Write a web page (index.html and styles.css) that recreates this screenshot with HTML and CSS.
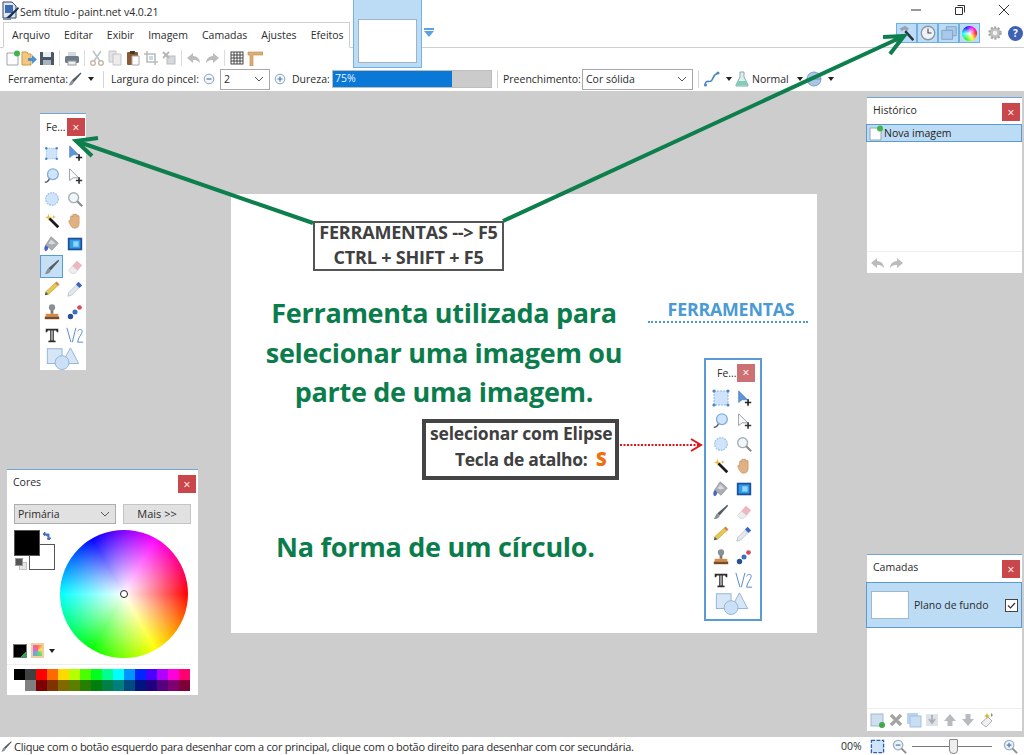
FILE: index.html
```html
<!DOCTYPE html>
<html lang="pt">
<head>
<meta charset="utf-8">
<title>Sem título - paint.net v4.0.21</title>
<link rel="stylesheet" href="styles.css">
</head>
<body>
<svg class="sprite" width="0" height="0" aria-hidden="true">
  <symbol id="i-app" viewBox="0 0 18 20"><path d="M1 1h9l4 4v12H1z" fill="#dfe8f4" stroke="#33475f"/><rect x="3" y="4" width="8" height="8" fill="#3d6cb5"/><path d="M4 17 16 6l1 1.500L7 18z" fill="#20304a"/><path d="M1 17h8v2H1z" fill="#7f93ad"/></symbol>
  <symbol id="i-new" viewBox="0 0 16 16"><path d="M2 3h8l3 3v9H2z" fill="#fff" stroke="#9aa5b1"/><circle cx="12" cy="3.500" r="3" fill="#3fb54a"/></symbol>
  <symbol id="i-open" viewBox="0 0 16 16"><path d="M1 2h5l1 2h3v11H1z" fill="#f4c87c" stroke="#c99a4a"/><path d="M7 8h4V5l5 4.500L11 14v-3H7z" fill="#4d92d6"/></symbol>
  <symbol id="i-save" viewBox="0 0 16 16"><path d="M1 2h13l1 1v12H1z" fill="#4a5866"/><rect x="4" y="2" width="8" height="5" fill="#e8edf2"/><rect x="4" y="10" width="8" height="5" fill="#a6b4c2"/></symbol>
  <symbol id="i-print" viewBox="0 0 16 16"><rect x="4" y="2" width="8" height="5" fill="#d5d9de"/><rect x="1" y="6" width="14" height="7" rx="1.500" fill="#6d7a88"/><rect x="4" y="11" width="8" height="4" fill="#eee" stroke="#999"/></symbol>
  <symbol id="i-cut" viewBox="0 0 16 16"><path d="M4 1l7 10M12 1 5 11" stroke="#c0c4c8" stroke-width="1.600" fill="none"/><circle cx="4" cy="13" r="2.300" fill="none" stroke="#c4b8a8" stroke-width="1.400"/><circle cx="12" cy="13" r="2.300" fill="none" stroke="#c4b8a8" stroke-width="1.400"/></symbol>
  <symbol id="i-copy" viewBox="0 0 16 16"><path d="M2 1h7v11H2z" fill="#e4e4e4" stroke="#c4c4c4"/><path d="M6 4h8v11H6z" fill="#ececec" stroke="#c4c4c4"/></symbol>
  <symbol id="i-paste" viewBox="0 0 16 16"><rect x="2" y="2" width="11" height="13" rx="1" fill="#8a5a34"/><rect x="5" y="1" width="5" height="3" fill="#4a3a2c"/><path d="M7 6h7v9H7z" fill="#fff" stroke="#aaa"/></symbol>
  <symbol id="i-crop" viewBox="0 0 16 16"><path d="M4 1v11h11M1 4h11v11" fill="none" stroke="#bbb" stroke-width="1.600"/><rect x="6" y="6" width="4" height="4" fill="#c9d8e6"/></symbol>
  <symbol id="i-desel" viewBox="0 0 16 16"><rect x="6" y="6" width="8" height="8" fill="#d3d9df" stroke="#bbb"/><path d="M2 2l6 6M8 2 2 8" stroke="#b5b5b5" stroke-width="1.800"/></symbol>
  <symbol id="i-undo" viewBox="0 0 16 16"><path d="M7 3 1 8l6 5v-3c3 0 5 .5 7 3 0-4-3-7-7-7z" fill="#bcbcbc"/></symbol>
  <symbol id="i-redo" viewBox="0 0 16 16"><path d="M9 3l6 5-6 5v-3c-3 0-5 .5-7 3 0-4 3-7 7-7z" fill="#bcbcbc"/></symbol>
  <symbol id="i-grid" viewBox="0 0 16 16"><rect x="2" y="2" width="12" height="12" fill="#fff" stroke="#444"/><path d="M5 2v12M8 2v12M11 2v12M2 5h12M2 8h12M2 11h12" stroke="#444"/></symbol>
  <symbol id="i-ruler" viewBox="0 0 16 16"><path d="M1 2h15v3H6v11H3V5H1z" fill="#dfae74" stroke="#b88748" stroke-width=".6"/></symbol>
  <symbol id="i-curve" viewBox="0 0 18 18"><path d="M2 15c1-7 5-1 7-5s2-6 6-7" fill="none" stroke="#4d84c4" stroke-width="1.600"/><circle cx="2.500" cy="15" r="1.500" fill="#4d84c4"/><circle cx="15" cy="3" r="1.500" fill="#4d84c4"/></symbol>
  <symbol id="i-flask" viewBox="0 0 14 16"><path d="M5 1h4v5l4 8v1H1v-1l4-8z" fill="#dff0ec" stroke="#87a9b4"/><path d="M3 10h8l1.500 4.500h-11z" fill="#7fcfb4"/></symbol>
  <symbol id="i-sphere" viewBox="0 0 16 16"><circle cx="8" cy="8" r="7" fill="#a9c6e4" stroke="#7c9cc0"/><path d="M1 8h14" stroke="#6f93bb"/></symbol>
  <symbol id="i-hammer" viewBox="0 0 20 20"><path d="M2 5 8 2l4 3-2 3-3-2-3 2z" fill="#9aa3ad"/><path d="M9 7l9 10-2 2L7 9z" fill="#27313f"/></symbol>
  <symbol id="i-clock" viewBox="0 0 20 20"><circle cx="10" cy="10" r="7.500" fill="#eef3f8" stroke="#8b97a5" stroke-width="1.500"/><path d="M10 5v5h4" fill="none" stroke="#444" stroke-width="1.200"/></symbol>
  <symbol id="i-layers" viewBox="0 0 20 20"><path d="M7 3h11v10H7z" fill="#a9c9ea" stroke="#7f9fc2"/><path d="M2 7h12v10H2z" fill="#a9c9ea" stroke="#7f9fc2"/></symbol>
  <symbol id="i-gear" viewBox="0 0 16 16"><circle cx="8" cy="8" r="5.500" fill="#c3c3c3" stroke="#a8a8a8" stroke-width="2.500" stroke-dasharray="2 1.500"/><circle cx="8" cy="8" r="2.200" fill="#f3f3f3"/></symbol>
  <symbol id="i-rect" viewBox="0 0 20 20"><rect x="3" y="3" width="14" height="14" fill="#cfe4fa" stroke="#8bb7e4" stroke-dasharray="2 1"/><g fill="#4c86c8"><circle cx="3" cy="3" r="1.600"/><circle cx="17" cy="3" r="1.600"/><circle cx="3" cy="17" r="1.600"/><circle cx="17" cy="17" r="1.600"/></g></symbol>
  <symbol id="i-movesel" viewBox="0 0 20 20"><path d="M4 2v13l4-3 6 0z" fill="#5c95d8" stroke="#3a6fb0" stroke-width=".6"/><path d="M11 15h7M14.500 11.500v7" stroke="#222" stroke-width="1.800"/></symbol>
  <symbol id="i-lasso" viewBox="0 0 20 20"><circle cx="11" cy="8" r="6" fill="#cfe4fa" stroke="#82aede" stroke-width="1.500"/><path d="M7 13c-1 3-3 4-5 4" stroke="#56606c" fill="none" stroke-width="1.600"/></symbol>
  <symbol id="i-movepx" viewBox="0 0 20 20"><path d="M4 2v13l4-3 6 0z" fill="#fff" stroke="#8c96a2"/><path d="M11 15h7M14.500 11.500v7" stroke="#333" stroke-width="1.800"/></symbol>
  <symbol id="i-ellipse" viewBox="0 0 20 20"><circle cx="10" cy="10" r="7" fill="#cfe4fa" stroke="#9fc4ea" stroke-width="1.400" stroke-dasharray="2 1"/></symbol>
  <symbol id="i-zoom" viewBox="0 0 20 20"><circle cx="8.500" cy="8.500" r="5.500" fill="#f3f6f9" stroke="#a7b0ba" stroke-width="1.600"/><path d="M12.500 12.500 18 18" stroke="#8c8c8c" stroke-width="2.400"/></symbol>
  <symbol id="i-wand" viewBox="0 0 20 20"><path d="M7 7l10 10" stroke="#1c1c1c" stroke-width="3"/><path d="M6 2l1 3 3 1-3 1-1 3-1-3-3-1 3-1z" fill="#e6c23a"/><path d="M12 3l.5 2 2 .5-2 .5-.5 2-.5-2-2-.5 2-.5z" fill="#c8b36a"/></symbol>
  <symbol id="i-hand" viewBox="0 0 20 20"><path d="M5 9V5.500a1.200 1.200 0 0 1 2.400 0V3.500a1.200 1.200 0 0 1 2.400 0a1.200 1.200 0 0 1 2.400 0V5a1.200 1.200 0 0 1 2.400 0v8c0 3-2 5-5 5-2.500 0-3.500-1-5-4L3 10.500C3 9 4.500 9 5 9z" fill="#dfb183" stroke="#b98a5c" stroke-width=".6"/></symbol>
  <symbol id="i-bucket" viewBox="0 0 20 20"><path d="M9 2l8 7-7 8-7-6z" fill="#a9aeb3" stroke="#777c82" stroke-width=".6"/><path d="M9 5l5 4.500-4 1-4-1z" fill="#d6d9dc"/><path d="M3 11c-2 2-2 6 0 7 1.500 0 2.500-2 3-4z" fill="#4a63c2"/></symbol>
  <symbol id="i-grad" viewBox="0 0 20 20"><rect x="2" y="3" width="16" height="14" fill="#1d4f9a"/><rect x="4" y="5" width="12" height="10" fill="#2f9ce8"/><rect x="8" y="7" width="6" height="6" fill="#8ed6fa"/></symbol>
  <symbol id="i-brush" viewBox="0 0 20 20"><path d="M17 2 6 11.500 8.500 14 18 3z" fill="#555c64"/><path d="M6 11.500C4 13 4 15 2 18c3 0 6-1 6.500-4z" fill="#8b9097"/></symbol>
  <symbol id="i-eraser" viewBox="0 0 20 20"><path d="M12 3l6 5-5 6-6-5z" fill="#eeb7c0"/><path d="M7 9l6 5-3 3H6l-3-3z" fill="#eee" stroke="#c8c8c8" stroke-width=".7"/></symbol>
  <symbol id="i-pencil" viewBox="0 0 20 20"><path d="M15 2l3 3L6 16l-3-3z" fill="#e6c850" stroke="#a89030" stroke-width=".5"/><path d="M3 13l3 3-4 1z" fill="#55504a"/><path d="M15 2l3 3-1.500 1.500-3-3z" fill="#d9795f"/></symbol>
  <symbol id="i-drop" viewBox="0 0 20 20"><path d="M14 2l4 4-3 3-4-4z" fill="#3868bd"/><path d="M11 6l3 3-8 8-4 1 1-4z" fill="#e4e9ef" stroke="#a7b0ba" stroke-width=".7"/></symbol>
  <symbol id="i-stamp" viewBox="0 0 20 20"><circle cx="10" cy="5" r="3.500" fill="#8b8f94"/><rect x="8.500" y="8" width="3" height="4" fill="#777"/><path d="M3 12h14v3H3z" fill="#d98a3e"/><path d="M2 15h16v3H2z" fill="#7c4a22"/></symbol>
  <symbol id="i-recolor" viewBox="0 0 20 20"><circle cx="15" cy="5" r="2.600" fill="#d64a5a"/><circle cx="10" cy="10" r="2.800" fill="#3b6fc0"/><circle cx="5" cy="15" r="3" fill="#274f9b"/></symbol>
  <symbol id="i-text" viewBox="0 0 20 20"><path d="M3 3h14v4h-1.500l-1-2H12v11l2 .5V18H6v-1.500l2-.5V5H5.500l-1 2H3z" fill="#2e2e2e"/><rect x="9" y="5" width="2" height="11" fill="#a8a8a8"/></symbol>
  <symbol id="i-line" viewBox="0 0 20 20"><path d="M1 2l4.500 16M7 18l4-16M13 6c1-3 5-3 5 0s-5 7-5 12h6" fill="none" stroke="#5a8cc8" stroke-width="1.100"/></symbol>
  <symbol id="i-shapes" viewBox="0 0 36 26"><rect x="1" y="3" width="16" height="16" fill="#d6e6f6" stroke="#8fb2d6"/><path d="M26 2l9 17H17z" fill="#d6e6f6" stroke="#8fb2d6"/><circle cx="17" cy="18" r="7.500" fill="#c9e0f6" stroke="#8fb2d6"/></symbol>
  <symbol id="i-laynew" viewBox="0 0 16 16"><rect x="1" y="2" width="12" height="12" fill="#cfdff0" stroke="#9fb8d2"/><circle cx="12" cy="13" r="3" fill="#3fa94c"/></symbol>
  <symbol id="i-laydel" viewBox="0 0 16 16"><path d="M3 3l10 10M13 3 3 13" stroke="#a4a4a4" stroke-width="3.200"/></symbol>
  <symbol id="i-laydup" viewBox="0 0 16 16"><rect x="1" y="1" width="11" height="11" fill="#b9d4ef"/><rect x="4" y="4" width="11" height="11" fill="#c9def3" stroke="#a3c2e0"/></symbol>
  <symbol id="i-laymrg" viewBox="0 0 16 16"><rect x="2" y="2" width="12" height="12" fill="#dfe3e7"/><path d="M8 3v7M5 7l3 4 3-4" stroke="#a9afb6" stroke-width="1.800" fill="none"/></symbol>
  <symbol id="i-up" viewBox="0 0 16 16"><path d="M8 2l6 7h-3.500v5h-5V9H2z" fill="#b7bbbf"/></symbol>
  <symbol id="i-down" viewBox="0 0 16 16"><path d="M8 14l6-7h-3.500V2h-5v5H2z" fill="#b7bbbf"/></symbol>
  <symbol id="i-layprop" viewBox="0 0 16 16"><path d="M10 5l4 4-6 6-5-4z" fill="#f0f0f0" stroke="#a8b0b8"/><path d="M9 1l1 2 2 1-2 1-1 2-1-2-2-1 2-1z" fill="#d9b93a"/><path d="M13 1l2 2-2 2z" fill="#5aa55a"/></symbol>
  <symbol id="i-fit" viewBox="0 0 16 16"><rect x="1.500" y="1.500" width="13" height="13" fill="#cfe4fa" stroke="#2e5fa6" stroke-width="1.400" stroke-dasharray="4 1.500"/></symbol>
  <symbol id="i-zminus" viewBox="0 0 16 16"><circle cx="6.500" cy="6.500" r="5" fill="#eef3f8" stroke="#9fb0c2" stroke-width="1.400"/><path d="M4 6.500h5" stroke="#4d78b0" stroke-width="1.300"/><path d="M10 10l5 5" stroke="#8c8c8c" stroke-width="2"/></symbol>
  <symbol id="i-zplus" viewBox="0 0 16 16"><circle cx="6.500" cy="6.500" r="5" fill="#eef3f8" stroke="#9fb0c2" stroke-width="1.400"/><path d="M4 6.500h5M6.500 4v5" stroke="#4d78b0" stroke-width="1.300"/><path d="M10 10l5 5" stroke="#8c8c8c" stroke-width="2"/></symbol>
  <symbol id="i-min" viewBox="0 0 12 12"><circle cx="6" cy="6" r="4.800" fill="#f4f7fa" stroke="#8aa2bd"/><path d="M3.500 6h5" stroke="#4d78b0" stroke-width="1.200"/></symbol>
  <symbol id="i-plus" viewBox="0 0 12 12"><circle cx="6" cy="6" r="4.800" fill="#f4f7fa" stroke="#8aa2bd"/><path d="M3.500 6h5M6 3.500v5" stroke="#4d78b0" stroke-width="1.200"/></symbol>
  <symbol id="i-chev" viewBox="0 0 10 6"><path d="M1 1l4 4 4-4" fill="none" stroke="#555"/></symbol>
</svg>

<div class="app">
  <header class="titlebar">
    <svg class="app-icon"><use href="#i-app"/></svg>
    <span class="app-title">Sem título - paint.net v4.0.21</span>
    <div class="win-controls">
      <svg class="wc" viewBox="0 0 12 12"><path d="M1 6h10" stroke="#333"/></svg>
      <svg class="wc" viewBox="0 0 12 12"><path d="M3.500 1.500h7v7M1.500 3.500h7v7h-7z" fill="none" stroke="#333"/></svg>
      <svg class="wc" viewBox="0 0 12 12"><path d="M1 1l10 10M11 1 1 11" stroke="#333"/></svg>
    </div>
  </header>

  <nav class="menubar">
    <div class="menu-tab">
      <span>Arquivo</span><span>Editar</span><span>Exibir</span><span>Imagem</span><span>Camadas</span><span>Ajustes</span><span>Efeitos</span>
    </div>
    <div class="panel-toggles">
      <div class="toggle-group">
        <span class="toggle"><svg class="tg"><use href="#i-hammer"/></svg></span>
        <span class="toggle"><svg class="tg"><use href="#i-clock"/></svg></span>
        <span class="toggle"><svg class="tg"><use href="#i-layers"/></svg></span>
        <span class="toggle"><span class="mini-wheel"></span></span>
      </div>
      <svg class="gear"><use href="#i-gear"/></svg>
      <span class="help">?</span>
    </div>
  </nav>

  <div class="thumb-tab"><div class="thumb-page"></div></div>
  <svg class="thumb-arrow" viewBox="0 0 10 10"><path d="M0 0h10v2H0zM0 3h10L5 9z" fill="#5aa3e0"/></svg>

  <div class="toolbar">
    <svg class="tb"><use href="#i-new"/></svg>
    <svg class="tb tb-tight"><use href="#i-open"/></svg>
    <svg class="tb"><use href="#i-save"/></svg>
    <i class="sep"></i>
    <svg class="tb"><use href="#i-print"/></svg>
    <i class="sep"></i>
    <svg class="tb"><use href="#i-cut"/></svg>
    <svg class="tb"><use href="#i-copy"/></svg>
    <svg class="tb"><use href="#i-paste"/></svg>
    <svg class="tb"><use href="#i-crop"/></svg>
    <svg class="tb"><use href="#i-desel"/></svg>
    <i class="sep"></i>
    <svg class="tb"><use href="#i-undo"/></svg>
    <svg class="tb"><use href="#i-redo"/></svg>
    <i class="sep"></i>
    <svg class="tb"><use href="#i-grid"/></svg>
    <svg class="tb"><use href="#i-ruler"/></svg>
  </div>

  <div class="optionsbar">
    <span class="o-ferr">Ferramenta:</span>
    <svg class="o-ic16"><use href="#i-brush"/></svg>
    <i class="caret o-c1"></i>
    <i class="osep o-s1"></i>
    <span class="o-larg">Largura do pincel:</span>
    <svg class="o-ic12 o-minus"><use href="#i-min"/></svg>
    <div class="combo o-width"><span>2</span><svg class="chev"><use href="#i-chev"/></svg></div>
    <svg class="o-ic12 o-plus"><use href="#i-plus"/></svg>
    <span class="o-dur">Dureza:</span>
    <div class="hardness"><div class="hardness-fill">75%</div></div>
    <i class="osep o-s2"></i>
    <span class="o-pre">Preenchimento:</span>
    <div class="combo o-fill"><span>Cor sólida</span><svg class="chev"><use href="#i-chev"/></svg></div>
    <i class="osep o-s3"></i>
    <svg class="o-curve"><use href="#i-curve"/></svg>
    <i class="caret o-c2"></i>
    <svg class="o-flask"><use href="#i-flask"/></svg>
    <span class="o-normal">Normal</span>
    <i class="caret o-c3"></i>
    <svg class="o-ic16 o-sphere"><use href="#i-sphere"/></svg>
    <i class="caret o-c4"></i>
  </div>

  <main class="workspace">
    <section class="slide">
      <p class="headline">Ferramenta utilizada para<br>selecionar uma imagem ou<br>parte de uma imagem.</p>
      <p class="headline2">Na forma de um círculo.</p>
      <div class="topic">FERRAMENTAS</div>
      <div class="note-keys"><div>FERRAMENTAS --&gt; F5<br>CTRL + SHIFT + F5</div></div>
      <div class="note-ellipse"><div>selecionar com Elipse<br><span class="note-shortcut">Tecla de atalho:&nbsp; <b>S</b></span></div></div>
      <div class="tools tools-slide">
        <div class="tools-head"><span>Fe...</span><button class="close close-soft">×</button></div>
        <div class="tools-grid">
          <svg class="ti ti-big"><use href="#i-rect"/></svg><svg class="ti"><use href="#i-movesel"/></svg>
          <svg class="ti"><use href="#i-lasso"/></svg><svg class="ti"><use href="#i-movepx"/></svg>
          <svg class="ti"><use href="#i-ellipse"/></svg><svg class="ti"><use href="#i-zoom"/></svg>
          <svg class="ti"><use href="#i-wand"/></svg><svg class="ti"><use href="#i-hand"/></svg>
          <svg class="ti"><use href="#i-bucket"/></svg><svg class="ti"><use href="#i-grad"/></svg>
          <svg class="ti"><use href="#i-brush"/></svg><svg class="ti"><use href="#i-eraser"/></svg>
          <svg class="ti"><use href="#i-pencil"/></svg><svg class="ti"><use href="#i-drop"/></svg>
          <svg class="ti"><use href="#i-stamp"/></svg><svg class="ti"><use href="#i-recolor"/></svg>
          <svg class="ti"><use href="#i-text"/></svg><svg class="ti"><use href="#i-line"/></svg>
          <svg class="ti-shapes"><use href="#i-shapes"/></svg>
        </div>
      </div>
    </section>

    <aside class="tools tools-win">
      <div class="tools-head"><span>Fe...</span><button class="close">×</button></div>
      <div class="tools-grid">
        <svg class="ti ti-small"><use href="#i-rect"/></svg><svg class="ti"><use href="#i-movesel"/></svg>
        <svg class="ti"><use href="#i-lasso"/></svg><svg class="ti"><use href="#i-movepx"/></svg>
        <svg class="ti"><use href="#i-ellipse"/></svg><svg class="ti"><use href="#i-zoom"/></svg>
        <svg class="ti"><use href="#i-wand"/></svg><svg class="ti"><use href="#i-hand"/></svg>
        <svg class="ti"><use href="#i-bucket"/></svg><svg class="ti"><use href="#i-grad"/></svg>
        <span class="ti-on"><svg class="ti"><use href="#i-brush"/></svg></span><svg class="ti"><use href="#i-eraser"/></svg>
        <svg class="ti"><use href="#i-pencil"/></svg><svg class="ti"><use href="#i-drop"/></svg>
        <svg class="ti"><use href="#i-stamp"/></svg><svg class="ti"><use href="#i-recolor"/></svg>
        <svg class="ti"><use href="#i-text"/></svg><svg class="ti"><use href="#i-line"/></svg>
        <svg class="ti-shapes"><use href="#i-shapes"/></svg>
      </div>
    </aside>

    <aside class="win win-history">
      <div class="win-head"><span>Histórico</span><button class="close">×</button></div>
      <div class="hist-row"><svg class="hist-ic"><use href="#i-new"/></svg><span>Nova imagem</span></div>
      <div class="win-foot">
        <svg class="foot-ic"><use href="#i-undo"/></svg>
        <svg class="foot-ic"><use href="#i-redo"/></svg>
      </div>
    </aside>

    <aside class="win win-layers">
      <div class="win-head win-head-tall"><span>Camadas</span><button class="close">×</button></div>
      <div class="layer-row">
        <div class="layer-thumb"></div>
        <span class="layer-name">Plano de fundo</span>
        <svg class="layer-check" viewBox="0 0 13 13"><rect x=".5" y=".5" width="12" height="12" fill="#fff" stroke="#444"/><path d="M3 6.500l2.500 2.500L10 4" fill="none" stroke="#333" stroke-width="1.200"/></svg>
      </div>
      <div class="win-foot win-foot-layers">
        <svg class="foot-ic"><use href="#i-laynew"/></svg>
        <svg class="foot-ic"><use href="#i-laydel"/></svg>
        <svg class="foot-ic"><use href="#i-laydup"/></svg>
        <svg class="foot-ic"><use href="#i-laymrg"/></svg>
        <svg class="foot-ic"><use href="#i-up"/></svg>
        <svg class="foot-ic"><use href="#i-down"/></svg>
        <svg class="foot-ic"><use href="#i-layprop"/></svg>
      </div>
    </aside>

    <aside class="win win-colors">
      <div class="win-head"><span>Cores</span><button class="close">×</button></div>
      <div class="color-ctrls">
        <div class="combo combo-gray"><span>Primária</span><svg class="chev"><use href="#i-chev"/></svg></div>
        <button class="more">Mais &gt;&gt;</button>
      </div>
      <div class="color-main">
        <div class="swatches">
          <div class="sw-sec"></div>
          <div class="sw-pri"></div>
          <svg class="sw-swap" viewBox="0 0 10 10"><path d="M2 3h5v4M5 8H8M1 3l2-2v4zM7 9 5 7h4z" fill="#4a6fc0" stroke="#4a6fc0"/></svg>
          <div class="sw-reset"><i class="sw-reset-back"></i><i class="sw-reset-front"></i></div>
        </div>
        <div class="wheel"><i class="wheel-dot"></i></div>
      </div>
      <div class="color-tools">
        <div class="sw-add"></div>
        <div class="sw-pal"></div>
        <i class="caret"></i>
      </div>
      <div class="palette">
        <i class="c01"></i><i class="c02"></i><i class="c03"></i><i class="c04"></i><i class="c05"></i><i class="c06"></i><i class="c07"></i><i class="c08"></i><i class="c09"></i><i class="c10"></i><i class="c11"></i><i class="c12"></i><i class="c13"></i><i class="c14"></i><i class="c15"></i><i class="c16"></i>
        <i class="c17"></i><i class="c18"></i><i class="c19"></i><i class="c20"></i><i class="c21"></i><i class="c22"></i><i class="c23"></i><i class="c24"></i><i class="c25"></i><i class="c26"></i><i class="c27"></i><i class="c28"></i><i class="c29"></i><i class="c30"></i><i class="c31"></i><i class="c32"></i>
      </div>
    </aside>
  </main>

  <footer class="statusbar">
    <svg class="st-brush"><use href="#i-brush"/></svg>
    <span class="st-text">Clique com o botão esquerdo para desenhar com a cor principal, clique com o botão direito para desenhar com cor secundária.</span>
    <span class="st-zoom">00%</span>
    <svg class="st-ic st-fit"><use href="#i-fit"/></svg>
    <svg class="st-ic st-minus"><use href="#i-zminus"/></svg>
    <div class="st-slider"><i></i></div>
    <svg class="st-ic st-plus"><use href="#i-zplus"/></svg>
  </footer>

  <svg class="arrows" viewBox="0 0 1024 755">
    <g fill="none" stroke="#0d7f4d" stroke-width="4">
      <path d="M313 223 76 141M98 138 76 141 92 156"/>
      <path d="M503 221 904 36M883 37 904 36 890 54"/>
    </g>
    <g fill="none" stroke="#e0141e" stroke-width="2">
      <path d="M620 445H700" stroke-dasharray="2 1.500"/>
      <path d="M691 439 701 445 691 451"/>
    </g>
  </svg>
</div>
</body>
</html>
```
FILE: styles.css
```css
* { box-sizing: border-box; }
html, body { margin: 0; height: 100%; overflow: hidden; }
body { font-family: "Open Sans", "Noto Sans", sans-serif; font-size: 10.5px; color: #2b2b2b; background: #fff; }
p { margin: 0; }
.sprite { position: absolute; }
.app { position: relative; display: flex; flex-direction: column; width: 1024px; height: 755px; overflow: hidden; }

/* title bar */
.titlebar { display: flex; align-items: center; height: 22px; flex: none; padding-left: 2px; }
.app-icon { width: 18px; height: 20px; }
.app-title { padding-top: 2px; letter-spacing: -.05px; }
.win-controls { display: flex; margin-left: auto; margin-right: 14px; gap: 32px; padding-bottom: 3px; }
.wc { width: 12px; height: 12px; }

/* menu */
.menubar { display: flex; height: 26px; flex: none; border-bottom: 1px solid #cfcfcf; padding-left: 3px; }
.menu-tab { display: flex; align-items: center; gap: 14px; width: 347px; height: 26px; padding-left: 8px; border: 1px solid #cfcfcf; border-bottom-color: #fff; background: #fff; }
.panel-toggles { display: flex; align-items: flex-start; margin-left: auto; padding-top: 1px; }
.toggle-group { display: flex; height: 20px; }
.toggle { display: flex; align-items: center; justify-content: center; width: 21px; height: 20px; background: #bcdcf5; border: 1px solid #6fb0e6; }
.tg { width: 18px; height: 18px; }
.mini-wheel { width: 15px; height: 15px; border-radius: 50%; background: radial-gradient(circle closest-side, #fff, rgba(255,255,255,0)), conic-gradient(#8000ff, #f0f 30deg, #f00 90deg, #ff0 150deg, #0f0 210deg, #0ff 270deg, #00f 330deg, #8000ff); }
.gear { width: 16px; height: 16px; margin: 2px 0 0 7px; }
.help { display: block; width: 15px; height: 15px; margin: 3px 1px 0 5px; border-radius: 50%; background: #3d62b4; color: #fff; font-size: 10px; font-weight: 700; line-height: 15px; text-align: center; }

/* document thumbnail */
.thumb-tab { position: absolute; left: 353px; top: 0; width: 69px; height: 68px; padding: 19px 4px 4px; background: #bcdcf5; border: 1px solid #6fb3e8; border-top: 0; }
.thumb-page { height: 100%; background: #fff; border: 1px solid #9db4c8; }
.thumb-arrow { position: absolute; left: 424px; top: 28px; width: 10px; height: 10px; }

/* toolbar */
.toolbar { display: flex; align-items: center; gap: 2px; height: 21px; flex: none; padding: 0 0 1px 5px; }
.tb { width: 16px; height: 16px; flex: none; }
.tb-tight { margin-left: -2px; }
.sep { width: 1px; height: 16px; margin: 0 2px; background: #dcdcdc; flex: none; }

/* options */
.optionsbar { display: flex; align-items: center; height: 22px; flex: none; padding: 0 0 2px 8px; background: #fff; }
.optionsbar > span { flex: none; white-space: nowrap; }
.o-ferr { width: 59px; }
.o-ic16 { width: 16px; height: 16px; flex: none; }
.caret { display: block; width: 0; height: 0; flex: none; border: 3.5px solid transparent; border-top: 4px solid #222; border-bottom: 0; }
.o-c1 { margin-left: 5px; }
.osep { display: block; width: 1px; height: 17px; background: #d4d4d4; flex: none; }
.o-s1 { margin: 0 7px 0 9px; }
.o-larg { width: 87px; }
.o-ic12 { width: 12px; height: 12px; flex: none; }
.o-minus { margin-left: 5px; }
.combo { display: flex; align-items: center; justify-content: space-between; height: 21px; flex: none; padding: 0 5px 0 3px; background: #fff; border: 1px solid #a8a8a8; }
.chev { width: 10px; height: 6px; }
.o-width { width: 50px; margin-left: 5px; }
.o-plus { margin-left: 4px; }
.o-dur { width: 38px; margin-left: 6px; }
.hardness { width: 160px; height: 18px; margin-left: 2px; background: #cbcbcb; border: 1px solid #bdbdbd; flex: none; }
.hardness-fill { width: 75%; height: 100%; padding-left: 2px; background: #0a78d7; color: #e8f4ff; line-height: 15px; }
.o-s2 { margin: 0 5px; }
.o-pre { width: 78px; }
.o-fill { width: 111px; margin-left: 1px; }
.o-s3 { margin: 0 4px 0 5px; }
.o-curve { width: 18px; height: 18px; flex: none; }
.o-c2 { margin-left: 5px; }
.o-flask { width: 14px; height: 16px; margin-left: 3px; flex: none; }
.o-normal { width: 42px; margin-left: 3px; }
.o-c3 { margin-left: 3px; }
.o-sphere { margin-left: 3px; }
.o-c4 { margin-left: 6px; }

/* workspace: a free canvas of floating windows */
.workspace { position: relative; flex: 1; background: #cdcdcd; }
.slide { position: absolute; left: 231px; top: 103px; width: 586px; height: 439px; background: #fff; border: 1px solid #fff; font-weight: 700; }
.headline { position: absolute; left: 0; top: 98px; width: 424px; text-align: center; color: #0b7d4c; font-size: 27px; line-height: 39.5px; white-space: nowrap; letter-spacing: -.3px; }
.headline2 { position: absolute; left: 44px; top: 332px; color: #0b7d4c; font-size: 27px; line-height: 40px; white-space: nowrap; letter-spacing: -.25px; }
.topic { position: absolute; left: 416px; top: 102px; width: 160px; height: 26px; padding-left: 6px; text-align: center; color: #4a9ad4; font-size: 17.8px; line-height: 24px; border-bottom: 2px dotted #4a9ad4; white-space: nowrap; letter-spacing: -.2px; }
.note-keys { position: absolute; left: 81px; top: 26px; display: flex; justify-content: center; align-items: center; width: 191px; height: 50px; padding-bottom: 3px; background: #fff; border: 2px solid #555; color: #404040; text-align: center; font-size: 18px; line-height: 25px; white-space: nowrap; letter-spacing: -.2px; }
.note-ellipse { position: absolute; left: 190px; top: 224px; display: flex; align-items: center; width: 197px; height: 61px; padding: 0 0 6px 4px; background: #fff; border: 4px solid #444; color: #404040; font-size: 17.5px; line-height: 25px; white-space: nowrap; letter-spacing: -.2px; }
.note-shortcut { display: block; padding-left: 25px; letter-spacing: -.3px; }
.note-shortcut b { color: #ee7010; font-size: 18.5px; }

/* tools window */
.tools { position: absolute; background: #fff; font-weight: 400; }
.tools-win { left: 40px; top: 22px; width: 46px; height: 257px; border-top: 1px solid #6fa5d8; }
.tools-slide { left: 472px; top: 163px; width: 58px; height: 263px; border: 2px solid #5b9bd5; padding-left: 3px; }
.tools-head { display: flex; align-items: center; justify-content: space-between; height: 28px; padding: 0 1px 2px 6px; }
.tools-slide .tools-head { height: 27px; padding: 0 5px 2px 8px; }
.tools-grid { display: grid; grid-template-columns: 23px 23px; grid-auto-rows: 22.7px; justify-items: center; align-items: center; }
.ti { display: block; width: 18px; height: 18px; }
.ti-small { width: 15px; height: 15px; }
.ti-big { width: 20px; height: 20px; }
.ti-on { display: flex; align-items: center; justify-content: center; width: 23px; height: 23px; background: #c5dff5; border: 1px solid #5b9bd5; }
.ti-shapes { grid-column: 1 / 3; width: 34px; height: 24px; }

/* buttons */
.close { display: block; width: 18px; height: 18px; padding: 0; background: #c9474b; border: 0; color: #fff; font: 400 12px/17px "Open Sans", sans-serif; text-align: center; flex: none; }
.close-soft { background: #cc7073; }

/* generic windows */
.win { position: absolute; display: flex; flex-direction: column; background: #fff; border-top: 1px solid #6fa5d8; }
.win-head { display: flex; align-items: flex-start; justify-content: space-between; height: 26px; flex: none; padding: 4px 2px 0 6px; line-height: 16px; }
.win-head .close { margin-top: 1px; }
.win-head-tall { height: 27px; }
.win-history { left: 867px; top: 6px; width: 155px; height: 176px; }
.win-layers { left: 867px; top: 463px; width: 155px; height: 177px; }
.win-colors { left: 7px; top: 378px; width: 191px; height: 226px; }

.hist-row { display: flex; align-items: center; height: 18px; flex: none; margin-left: -1px; background: #bcdcf5; border: 1px solid #5b9bd5; color: #222; }
.hist-ic { width: 16px; height: 16px; margin: 0 0 0 1px; }
.win-foot { display: flex; align-items: center; gap: 2px; height: 22px; margin-top: auto; padding-left: 3px; border-top: 1px solid #eee; }
.foot-ic { width: 16px; height: 16px; flex: none; }
.win-foot-layers { height: 23px; }

.layer-row { display: flex; align-items: center; height: 46px; flex: none; margin-left: -1px; padding-left: 4px; background: #bcdcf5; border: 1px solid #5b9bd5; }
.layer-thumb { width: 38px; height: 28px; background: #fff; border: 1px solid #9db9d2; flex: none; }
.layer-name { margin-left: 5px; white-space: nowrap; }
.layer-check { width: 13px; height: 13px; margin-left: auto; margin-right: 3px; flex: none; }

/* colours */
.color-ctrls { display: flex; gap: 7px; padding: 8px 0 0 7px; height: 28px; flex: none; }
.combo-gray { width: 102px; height: 20px; background: #e1e1e1; border-color: #adadad; }
.more { width: 68px; height: 20px; padding: 0; background: #e1e1e1; border: 1px solid #c4c4c4; color: #2b2b2b; font: 400 11px/18px "Open Sans", sans-serif; }
.color-main { display: flex; height: 116px; flex: none; padding-left: 7px; }
.swatches { position: relative; width: 46px; height: 46px; flex: none; }
.sw-pri { position: absolute; left: 0; top: 6px; width: 26px; height: 26px; background: #000; border: 1px solid #555; }
.sw-sec { position: absolute; left: 15px; top: 20px; width: 26px; height: 26px; background: #fff; border: 1px solid #555; }
.sw-swap { position: absolute; left: 28px; top: 7px; width: 10px; height: 10px; }
.sw-reset { position: absolute; left: 1px; top: 34px; width: 12px; height: 12px; }
.sw-reset-back { position: absolute; right: 0; bottom: 0; width: 8px; height: 8px; background: #e4e4e4; border: 1px solid #c4c4c4; }
.sw-reset-front { position: absolute; left: 0; top: 0; width: 8px; height: 8px; background: #555; border: 1px solid #999; }
.wheel { position: relative; width: 128px; height: 128px; margin-top: 6px; flex: none; border-radius: 50%; background: radial-gradient(circle closest-side, #fff, rgba(255,255,255,0)), conic-gradient(#8000ff, #f0f 30deg, #f00 90deg, #ff0 150deg, #0f0 210deg, #0ff 270deg, #00f 330deg, #8000ff); }
.wheel-dot { position: absolute; left: 60px; top: 60px; width: 8px; height: 8px; border-radius: 50%; background: #fff; border: 1px solid #222; }
.color-tools { display: flex; align-items: center; gap: 4px; height: 25px; flex: none; padding: 0 0 3px 6px; border-bottom: 1px solid #eee; margin-right: 7px; }
.sw-add { width: 14px; height: 14px; background: linear-gradient(135deg, #000 78%, #2da44e 78%); border: 1px solid #777; }
.sw-pal { width: 13px; height: 15px; background: conic-gradient(#f66, #fd6, #6d6, #6ad, #d6d, #f66); border: 2px solid #f1cf9d; }
.color-tools .caret { margin-left: 1px; }
.palette { display: grid; grid-template-columns: repeat(16, 11px); grid-auto-rows: 11px; margin: 4px 0 0 7px; }
.c01 { background: #000; } .c02 { background: #404040; } .c03 { background: #f00; } .c04 { background: #ff6a00; }
.c05 { background: #ffd800; } .c06 { background: #b6ff00; } .c07 { background: #4cff00; } .c08 { background: #00ff21; }
.c09 { background: #00ff90; } .c10 { background: #0ff; } .c11 { background: #0094ff; } .c12 { background: #0026ff; }
.c13 { background: #4800ff; } .c14 { background: #b200ff; } .c15 { background: #ff00dc; } .c16 { background: #ff006e; }
.c17 { background: #fff; } .c18 { background: #808080; } .c19 { background: #7f0000; } .c20 { background: #7f3300; }
.c21 { background: #7f6a00; } .c22 { background: #5b7f00; } .c23 { background: #267f00; } .c24 { background: #007f0e; }
.c25 { background: #007f46; } .c26 { background: #007f7f; } .c27 { background: #004a7f; } .c28 { background: #00137f; }
.c29 { background: #21007f; } .c30 { background: #57007f; } .c31 { background: #7f006e; } .c32 { background: #7f0037; }

/* status bar */
.statusbar { display: flex; align-items: center; height: 18px; flex: none; background: #fff; white-space: nowrap; }
.st-brush { width: 13px; height: 15px; flex: none; }
.st-text { width: 619px; margin-left: 1px; font-size: 11px; letter-spacing: -.27px; flex: none; }
.st-zoom { margin-left: 208px; width: 29px; flex: none; }
.st-ic { width: 15px; height: 15px; flex: none; }
.st-minus { margin-left: 7px; }
.st-slider { position: relative; width: 80px; height: 1px; margin: 0 11px 0 5px; background: #777; flex: none; }
.st-slider i { position: absolute; left: 37px; top: -7px; width: 9px; height: 15px; background: #eee; border: 1px solid #888; border-radius: 1px 1px 4px 4px; }

/* annotation arrows over the whole window */
.arrows { position: absolute; left: 0; top: 0; width: 1024px; height: 755px; pointer-events: none; }
```
